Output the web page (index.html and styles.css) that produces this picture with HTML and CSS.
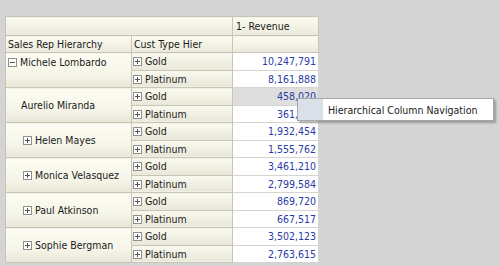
FILE: index.html
```html
<!DOCTYPE html>
<html>
<head>
<meta charset="utf-8">
<link rel="stylesheet" href="styles.css">
</head>
<body>
<div class="wrap">
<table class="pivot">
  <colgroup><col class="c1"><col class="c2"><col class="c3"></colgroup>
  <tr class="h1"><td colspan="2" class="hd"></td><td class="hd">1- Revenue</td></tr>
  <tr class="h2"><td class="hd">Sales Rep Hierarchy</td><td class="hd">Cust Type Hier</td><td class="hd"></td></tr>

  <tr class="r"><td rowspan="2" class="rh top"><span class="ic"><svg width="9" height="9" viewBox="0 0 9 9"><rect x="0.5" y="0.5" width="8" height="8" fill="#fff" stroke="#8f8f8f"/><path d="M2 4.5h5" stroke="#555"/></svg></span>Michele Lombardo</td><td class="ct"><span class="ic"><svg width="9" height="9" viewBox="0 0 9 9"><rect x="0.5" y="0.5" width="8" height="8" fill="#fff" stroke="#8f8f8f"/><path d="M2 4.5h5M4.5 2v5" stroke="#555"/></svg></span>Gold</td><td class="num">10,247,791</td></tr>
  <tr class="r"><td class="ct"><span class="ic"><svg width="9" height="9" viewBox="0 0 9 9"><rect x="0.5" y="0.5" width="8" height="8" fill="#fff" stroke="#8f8f8f"/><path d="M2 4.5h5M4.5 2v5" stroke="#555"/></svg></span>Platinum</td><td class="num">8,161,888</td></tr>

  <tr class="r"><td rowspan="2" class="rh leaf">Aurelio Miranda</td><td class="ct"><span class="ic"><svg width="9" height="9" viewBox="0 0 9 9"><rect x="0.5" y="0.5" width="8" height="8" fill="#fff" stroke="#8f8f8f"/><path d="M2 4.5h5M4.5 2v5" stroke="#555"/></svg></span>Gold</td><td class="num hov">458,020</td></tr>
  <tr class="r"><td class="ct"><span class="ic"><svg width="9" height="9" viewBox="0 0 9 9"><rect x="0.5" y="0.5" width="8" height="8" fill="#fff" stroke="#8f8f8f"/><path d="M2 4.5h5M4.5 2v5" stroke="#555"/></svg></span>Platinum</td><td class="num">361,148</td></tr>

  <tr class="r"><td rowspan="2" class="rh sub"><span class="ic"><svg width="9" height="9" viewBox="0 0 9 9"><rect x="0.5" y="0.5" width="8" height="8" fill="#fff" stroke="#8f8f8f"/><path d="M2 4.5h5M4.5 2v5" stroke="#555"/></svg></span>Helen Mayes</td><td class="ct"><span class="ic"><svg width="9" height="9" viewBox="0 0 9 9"><rect x="0.5" y="0.5" width="8" height="8" fill="#fff" stroke="#8f8f8f"/><path d="M2 4.5h5M4.5 2v5" stroke="#555"/></svg></span>Gold</td><td class="num">1,932,454</td></tr>
  <tr class="r"><td class="ct"><span class="ic"><svg width="9" height="9" viewBox="0 0 9 9"><rect x="0.5" y="0.5" width="8" height="8" fill="#fff" stroke="#8f8f8f"/><path d="M2 4.5h5M4.5 2v5" stroke="#555"/></svg></span>Platinum</td><td class="num">1,555,762</td></tr>

  <tr class="r"><td rowspan="2" class="rh sub"><span class="ic"><svg width="9" height="9" viewBox="0 0 9 9"><rect x="0.5" y="0.5" width="8" height="8" fill="#fff" stroke="#8f8f8f"/><path d="M2 4.5h5M4.5 2v5" stroke="#555"/></svg></span>Monica Velasquez</td><td class="ct"><span class="ic"><svg width="9" height="9" viewBox="0 0 9 9"><rect x="0.5" y="0.5" width="8" height="8" fill="#fff" stroke="#8f8f8f"/><path d="M2 4.5h5M4.5 2v5" stroke="#555"/></svg></span>Gold</td><td class="num">3,461,210</td></tr>
  <tr class="r"><td class="ct"><span class="ic"><svg width="9" height="9" viewBox="0 0 9 9"><rect x="0.5" y="0.5" width="8" height="8" fill="#fff" stroke="#8f8f8f"/><path d="M2 4.5h5M4.5 2v5" stroke="#555"/></svg></span>Platinum</td><td class="num">2,799,584</td></tr>

  <tr class="r"><td rowspan="2" class="rh sub"><span class="ic"><svg width="9" height="9" viewBox="0 0 9 9"><rect x="0.5" y="0.5" width="8" height="8" fill="#fff" stroke="#8f8f8f"/><path d="M2 4.5h5M4.5 2v5" stroke="#555"/></svg></span>Paul Atkinson</td><td class="ct"><span class="ic"><svg width="9" height="9" viewBox="0 0 9 9"><rect x="0.5" y="0.5" width="8" height="8" fill="#fff" stroke="#8f8f8f"/><path d="M2 4.5h5M4.5 2v5" stroke="#555"/></svg></span>Gold</td><td class="num">869,720</td></tr>
  <tr class="r"><td class="ct"><span class="ic"><svg width="9" height="9" viewBox="0 0 9 9"><rect x="0.5" y="0.5" width="8" height="8" fill="#fff" stroke="#8f8f8f"/><path d="M2 4.5h5M4.5 2v5" stroke="#555"/></svg></span>Platinum</td><td class="num">667,517</td></tr>

  <tr class="r"><td rowspan="2" class="rh sub"><span class="ic"><svg width="9" height="9" viewBox="0 0 9 9"><rect x="0.5" y="0.5" width="8" height="8" fill="#fff" stroke="#8f8f8f"/><path d="M2 4.5h5M4.5 2v5" stroke="#555"/></svg></span>Sophie Bergman</td><td class="ct"><span class="ic"><svg width="9" height="9" viewBox="0 0 9 9"><rect x="0.5" y="0.5" width="8" height="8" fill="#fff" stroke="#8f8f8f"/><path d="M2 4.5h5M4.5 2v5" stroke="#555"/></svg></span>Gold</td><td class="num">3,502,123</td></tr>
  <tr class="r"><td class="ct"><span class="ic"><svg width="9" height="9" viewBox="0 0 9 9"><rect x="0.5" y="0.5" width="8" height="8" fill="#fff" stroke="#8f8f8f"/><path d="M2 4.5h5M4.5 2v5" stroke="#555"/></svg></span>Platinum</td><td class="num">2,763,615</td></tr>
</table>
<div class="menu"><span class="strip"></span><span class="label">Hierarchical Column Navigation</span></div>
</div>
</body>
</html>
```

FILE: styles.css
```css
html, body {
  margin: 0;
  padding: 0;
  background: #d4d4d4;
  overflow: hidden;
}
.wrap {
  position: relative;
  padding: 16px 0 0 5px;
  font-family: "DejaVu Sans Condensed", "DejaVu Sans", sans-serif;
  font-size: 10.5px;
  color: #1a1a1a;
}
.pivot {
  border-collapse: collapse;
  table-layout: fixed;
  width: 313px;
  border: 1px solid #a8a79c;
}
.c1 { width: 126px; }
.c2 { width: 101px; }
.c3 { width: 86px; }
.pivot td {
  padding: 0 2px;
  border: 1px solid #c6c5b6;
  white-space: nowrap;
  overflow: hidden;
}
.hd {
  background: linear-gradient(#fbfbf1, #ebe9da);
}
.h1 td { height: 18px; padding-left: 3px; }
.h2 td { height: 16px; }
.r td { height: 16.5px; }
.rh {
  background: linear-gradient(#fcfcf3 0%, #f6f5e9 60%, #e9e7d8 100%);
  vertical-align: middle;
}
.rh.top { vertical-align: top; padding-top: 3px; }
.rh.leaf { padding-left: 15px; }
.rh.sub { padding-left: 17px; }
.ct {
  background: linear-gradient(#f9f9ef, #e9e7d8);
}
.pivot td.ct { padding-left: 1px; }
.num {
  background: #fff;
  text-align: right;
  color: #2a3aa6;
  border-color: #d4d4d0 !important;
  border-left-color: #c6c5b6 !important;
}
.num.hov { background: #dedede; }
.ic {
  display: inline-block;
  width: 9px;
  height: 9px;
  margin-right: 3px;
  vertical-align: -1px;
}
.ic svg { display: block; }
.menu {
  position: absolute;
  left: 297px;
  top: 98px;
  width: 195px;
  height: 21px;
  background: #fff;
  border: 1px solid #a7a7a7;
  box-shadow: 2px 2px 2px rgba(0,0,0,0.28);
  display: flex;
  align-items: center;
}
.strip {
  align-self: stretch;
  width: 25px;
  background: #d9e0e8;
}
.label {
  padding-left: 5px;
  color: #1a1a1a;
}
```
